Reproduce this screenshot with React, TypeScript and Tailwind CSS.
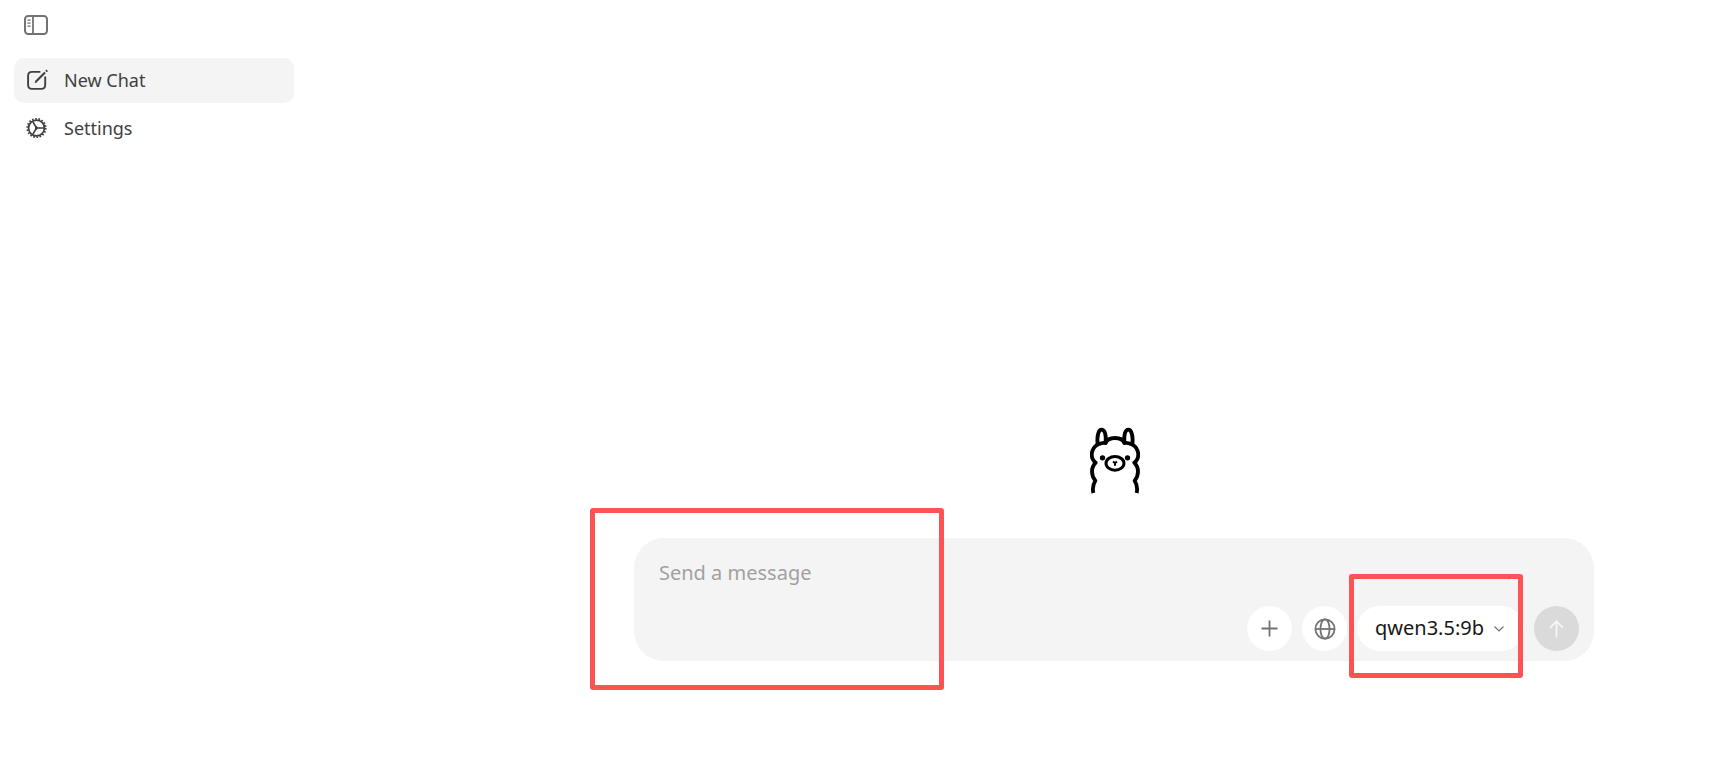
import { useState } from "react";
import type { ReactNode } from "react";
import clsx from "clsx";

const models = ["qwen3.5:9b"];

export default function App() {
  return (
    <div className="flex min-h-screen bg-white font-['Noto_Sans','Noto_Sans_CJK_SC',sans-serif] text-neutral-700">
      <Sidebar />
      <main className="flex min-w-0 flex-1 flex-col items-center justify-center pl-[201px] pt-[314px] pb-[1px]">
        <Llama />
        <Composer />
      </main>
    </div>
  );
}

function Sidebar() {
  return (
    <aside className="w-[308px] shrink-0 px-3.5 pt-3.5">
      <button
        type="button"
        aria-label="Toggle sidebar"
        className="ml-2.5 block text-neutral-500"
      >
        <SidebarIcon />
      </button>
      <nav className="mt-[22px] flex flex-col gap-[3px]">
        <NavItem icon={<ComposeIcon />} label="New Chat" active />
        <NavItem icon={<GearIcon />} label="Settings" />
      </nav>
    </aside>
  );
}

type NavItemProps = {
  icon: ReactNode;
  label: string;
  active?: boolean;
};

function NavItem({ icon, label, active = false }: NavItemProps) {
  return (
    <a
      href="#"
      className={clsx(
        "flex h-[45px] w-[280px] items-center gap-4 rounded-[10px] pb-0.5 pl-3 text-lg",
        active && "bg-[#f4f4f4]",
      )}
    >
      {icon}
      {label}
    </a>
  );
}

function Composer() {
  const [message, setMessage] = useState("");

  return (
    <form
      onSubmit={(e) => e.preventDefault()}
      className="relative mt-11 flex w-full max-w-[960px] flex-col rounded-[30px] bg-[#f4f4f4] pt-[19px] pr-[15px] pb-2.5 pl-[25px]"
    >
      <textarea
        rows={1}
        aria-label="Send a message"
        placeholder="Send a message"
        value={message}
        onChange={(e) => setMessage(e.target.value)}
        className="h-[49px] resize-none bg-transparent text-[20px] leading-8 outline-none placeholder:text-[#a1a1a1]"
      />
      <div className="flex items-center justify-end gap-2.5">
        <RoundButton label="Add attachment">
          <svg viewBox="0 0 17 17" className="size-[17px]" fill="none" stroke="currentColor" strokeWidth="1.8">
            <path d="M8.5 0.5v16M0.5 8.5h16" />
          </svg>
        </RoundButton>
        <RoundButton label="Web search">
          <GlobeIcon />
        </RoundButton>
        <div className="relative">
          <select
            aria-label="Model"
            className="block h-[45px] w-[167px] appearance-none rounded-full bg-white pr-10 pb-0.5 pl-[18px] text-[20px] text-neutral-900 outline-none"
          >
            {models.map((model) => (
              <option key={model}>{model}</option>
            ))}
          </select>
          <svg
            viewBox="0 0 10 6"
            className="pointer-events-none absolute top-5 right-5 h-1.5 w-2.5 text-neutral-500"
            fill="none"
            stroke="currentColor"
            strokeWidth="1.2"
          >
            <path d="M0.5 0.5 5 5 9.5 0.5" />
          </svg>
        </div>
        <button
          type="submit"
          aria-label="Send"
          className="flex size-[45px] items-center justify-center rounded-full bg-[#dadada] text-[#f6f6f6]"
        >
          <svg viewBox="0 0 15 18" className="h-[18px] w-[15px]" fill="none" stroke="currentColor" strokeWidth="1.8">
            <path d="M7.5 17.5V1.3M1 7.8 7.5 1.3 14 7.8" />
          </svg>
        </button>
      </div>
      <Highlight className="-top-[30px] -left-11 h-[182px] w-[354px]" />
      <Highlight className="top-9 right-[71px] h-[104px] w-[174px]" />
    </form>
  );
}

function Highlight({ className }: { className: string }) {
  return (
    <div
      className={clsx(
        "pointer-events-none absolute rounded-[3px] border-5 border-[#ff5252]",
        className,
      )}
    />
  );
}

function RoundButton({ label, children }: { label: string; children: ReactNode }) {
  return (
    <button
      type="button"
      aria-label={label}
      className="flex size-[45px] items-center justify-center rounded-full bg-white text-neutral-500"
    >
      {children}
    </button>
  );
}

function SidebarIcon() {
  return (
    <svg viewBox="0 0 24 22" className="h-[22px] w-6" fill="none" stroke="currentColor">
      <rect x="1" y="2" width="22" height="18" rx="3.2" strokeWidth="2" />
      <path d="M9 2v18" strokeWidth="1.8" />
      <path d="M3.4 6.2h3.2M3.4 9.2h3.2M3.4 12.2h3.2" strokeWidth="1.2" />
    </svg>
  );
}

function ComposeIcon() {
  return (
    <svg viewBox="0 0 22 22" className="size-[22px] shrink-0" fill="none" stroke="currentColor">
      <path
        d="M14.4 2.9H6C3.6 2.9 2.1 4.4 2.1 6.7v9.4c0 2.3 1.5 3.8 3.9 3.8h9.4c2.3 0 3.8-1.5 3.8-3.8V7.5"
        strokeWidth="1.9"
      />
      <path d="M10 12.5 19 3.5" strokeWidth="2.2" />
      <path d="M9 13.7l.5-1.9 1.4 1.4z" fill="currentColor" strokeWidth="0.5" />
      <path d="M20 2.5 21.2 1.3" strokeWidth="2.2" />
    </svg>
  );
}

function GearIcon() {
  return (
    <svg viewBox="0 0 22 22" className="size-[22px] shrink-0" fill="none" stroke="currentColor">
      <circle cx="10.5" cy="11" r="7.9" strokeWidth="1.7" />
      <circle cx="10.5" cy="11" r="9.2" strokeWidth="1.8" strokeDasharray="1.6 1.612" />
      <path d="M10.5 11H18.2M10.5 11 6.7 4.4M10.5 11 6.7 17.6" strokeWidth="1.6" />
      <circle cx="10.5" cy="11" r="1.2" fill="currentColor" strokeWidth="1" />
    </svg>
  );
}

function GlobeIcon() {
  return (
    <svg viewBox="0 0 22 22" className="size-[22px]" fill="none" stroke="currentColor" strokeWidth="1.8">
      <circle cx="11" cy="11" r="9.6" />
      <ellipse cx="11" cy="11" rx="4.6" ry="9.6" />
      <path d="M1.3 11h19.4" />
    </svg>
  );
}

function Llama() {
  return (
    <svg
      viewBox="58 37 150 201"
      className="ml-0.5 h-[67px] w-[50px] text-black"
      fill="none"
      stroke="currentColor"
      strokeWidth="11.5"
      strokeLinejoin="round"
      role="img"
      aria-label="Llama"
    >
      {/* ears */}
      <path d="M81 91C78 62 84 45 93 45C102 45 107 60 105 83" />
      <path d="M185 91C188 62 182 45 173 45C164 45 159 60 161 83" />
      <path d="M84 89C91 85 97 84 105 85C112 65 154 65 161 85C169 84 175 85 182 89" />
      {/* wool */}
      <path d="M85 88C66 95 58 118 67 135Q70 141 75 144C60 159 61 182 74 198C67 209 65 221 68 235" />
      <path d="M181 88C200 95 208 118 199 135Q196 141 191 144C206 159 205 182 192 198C199 209 201 221 198 235" />
      {/* face */}
      <ellipse cx="133" cy="146" rx="27" ry="20.5" strokeWidth="9" />
      <circle cx="95.5" cy="129.5" r="8" fill="currentColor" stroke="none" />
      <circle cx="170.5" cy="129.5" r="8" fill="currentColor" stroke="none" />
      <path d="M127 141 133 145 139 141M133 144V153" strokeWidth="6" />
    </svg>
  );
}
